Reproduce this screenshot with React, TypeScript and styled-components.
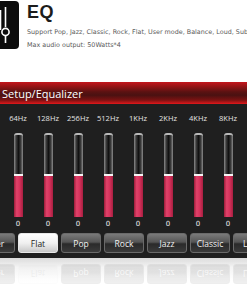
import styled, { createGlobalStyle } from 'styled-components'

const GlobalStyle = createGlobalStyle`
  html, body {
    margin: 0;
    padding: 0;
    background: #fff;
    overflow: hidden;
  }
  body {
    font-family: 'Liberation Sans', Arial, sans-serif;
  }
`

const bands = ['64Hz', '128Hz', '256Hz', '512Hz', '1KHz', '2KHz', '4KHz', '8KHz']
const presets = ['User', 'Flat', 'Pop', 'Rock', 'Jazz', 'Classic', 'Loud']

const EqIcon = () => (
  <svg width='30' height='48' viewBox='0 0 30 48'>
    <line x1='11.5' y1='9' x2='11.5' y2='29' stroke='#fff' strokeWidth='1.6' />
    <line x1='16.5' y1='6' x2='16.5' y2='26' stroke='#fff' strokeWidth='1.6' />
    <circle cx='16.5' cy='31' r='3.6' fill='none' stroke='#fff' strokeWidth='1.6' />
    <line x1='16.5' y1='35' x2='16.5' y2='42' stroke='#fff' strokeWidth='1.6' />
  </svg>
)

const App = () => {
  return (
    <Page>
      <GlobalStyle />
      <Intro>
        <IconBox>
          <EqIcon />
        </IconBox>
        <IntroText>
          <Title>EQ</Title>
          <Desc>Support Pop, Jazz, Classic, Rock, Flat, User mode, Balance, Loud, Subwoofer</Desc>
          <Desc>Max audio output: 50Watts*4</Desc>
        </IntroText>
      </Intro>

      <HeaderBar>Setup/Equalizer</HeaderBar>

      <Panel>
        <Bands>
          {bands.map((b) => (
            <Band key={b}>
              <BandLabel>{b}</BandLabel>
              <Track>
                <Fill style={{ height: '52%' }} />
              </Track>
              <Value>0</Value>
            </Band>
          ))}
        </Bands>
        <Presets>
          {presets.map((p) => (
            <Preset key={p} $active={p === 'Flat'}>
              {p}
            </Preset>
          ))}
        </Presets>
      </Panel>

      <Reflection>
        <Presets>
          {presets.map((p) => (
            <GhostPreset key={p} $active={p === 'Flat'}>
              {p}
            </GhostPreset>
          ))}
        </Presets>
      </Reflection>
    </Page>
  )
}

const Page = styled.div`
  width: 247px;
  height: 296px;
  overflow: hidden;
  display: flex;
  flex-direction: column;
`

const Intro = styled.div`
  height: 82px;
  display: flex;
  align-items: flex-start;
  gap: 8px;
  padding-top: 1px;
  box-sizing: border-box;
`

const IconBox = styled.div`
  width: 30px;
  height: 48px;
  margin-left: -11px;
  background: #0c0c0c;
  border-radius: 4px;
  flex-shrink: 0;
`

const IntroText = styled.div`
  display: flex;
  flex-direction: column;
  white-space: nowrap;
  padding-top: 2px;
`

const Title = styled.div`
  font-family: 'Liberation Sans', Arial, sans-serif;
  font-weight: bold;
  font-size: 18px;
  line-height: 18px;
  color: #1c1c1c;
  letter-spacing: 0.5px;
  margin-bottom: 5px;
`

const Desc = styled.div`
  font-family: 'DejaVu Sans', sans-serif;
  font-size: 6.4px;
  line-height: 13px;
  color: #5a5a5a;
`

const HeaderBar = styled.div`
  height: 22px;
  padding-left: 2px;
  display: flex;
  align-items: center;
  font-family: 'Open Sans', sans-serif;
  font-size: 11px;
  color: #fff;
  background: linear-gradient(
    to bottom,
    #c4161c 0%,
    #9a1416 18%,
    #5a1212 45%,
    #4a1111 60%,
    #7a1212 82%,
    #e2181b 100%
  );
`

const Panel = styled.div`
  height: 154px;
  background: #1f1f1f;
  display: flex;
  flex-direction: column;
  box-sizing: border-box;
  padding-top: 9px;
`

const Bands = styled.div`
  display: grid;
  grid-template-columns: repeat(8, 30px);
  padding-left: 3px;
`

const Band = styled.div`
  display: flex;
  flex-direction: column;
  align-items: center;
`

const BandLabel = styled.div`
  font-family: 'Open Sans', sans-serif;
  font-size: 7.5px;
  line-height: 10px;
  color: #e4e4e4;
  height: 20px;
`

const Track = styled.div`
  position: relative;
  width: 9px;
  height: 84px;
  box-sizing: border-box;
  border-radius: 3px 3px 1px 1px;
  background: linear-gradient(to right, #8c8c8c 0%, #3a3a3a 25%, #111 50%, #3a3a3a 75%, #8c8c8c 100%);
  border-top: 2px solid #b8b8b8;
  display: flex;
  flex-direction: column;
  justify-content: flex-end;
`

const Fill = styled.div`
  width: 100%;
  box-sizing: border-box;
  border-top: 2px solid #f4f4f4;
  background: linear-gradient(to right, #9e1c3a 0%, #e0426a 30%, #d8345e 60%, #a81e40 100%);
`

const Value = styled.div`
  font-family: 'DejaVu Sans', sans-serif;
  font-size: 7px;
  line-height: 9px;
  margin-top: 3px;
  color: #f0f0f0;
`

const Presets = styled.div`
  display: flex;
  gap: 3px;
  margin-left: -25px;
  margin-top: 4px;
`

const Preset = styled.div<{ $active?: boolean }>`
  flex-shrink: 0;
  width: 40px;
  height: 20px;
  box-sizing: border-box;
  border-radius: 3px;
  display: flex;
  align-items: center;
  justify-content: center;
  font-family: 'Open Sans', sans-serif;
  font-size: 8.5px;
  color: ${(p) => (p.$active ? '#222' : '#f2f2f2')};
  border: 1px solid ${(p) => (p.$active ? '#e8e8e8' : '#6a6a6a')};
  background: ${(p) =>
    p.$active
      ? 'linear-gradient(to bottom, #ffffff 0%, #f0f0f0 50%, #c8c8c8 100%)'
      : 'linear-gradient(to bottom, #7a7a7a 0%, #555 45%, #2a2a2a 55%, #3a3a3a 100%)'};
`

const Reflection = styled.div`
  flex: 1;
  background: linear-gradient(to bottom, #d8d8d8 0%, #f4f4f4 25%, #ffffff 60%);
  overflow: hidden;
  opacity: 0.9;
`

const GhostPreset = styled(Preset)`
  transform: scaleY(-1);
  opacity: 0.12;
  margin-top: 2px;
  color: ${(p) => (p.$active ? '#888' : '#fff')};
`

export default App
